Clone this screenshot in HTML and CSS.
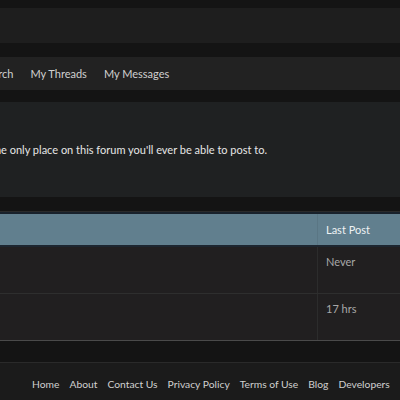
FILE: index.html
```html
<!DOCTYPE html>
<html>
<head>
<meta charset="utf-8">
<link rel="stylesheet" href="styles.css">
</head>
<body>
<div class="page">
  <div class="topstrip"></div>
  <header class="header"></header>
  <nav class="nav">
    <a class="nav-item nav-search">Search</a>
    <a class="nav-item">My Threads</a>
    <a class="nav-item">My Messages</a>
  </nav>
  <section class="notice">
    <p class="notice-text">This is the only place on this forum you'll ever be able to post to.</p>
  </section>
  <div class="table">
    <div class="thead">
      <div class="cell main"></div>
      <div class="cell last">Last Post</div>
    </div>
    <div class="row">
      <div class="cell main"></div>
      <div class="cell last">Never</div>
    </div>
    <div class="row">
      <div class="cell main"></div>
      <div class="cell last">17 hrs</div>
    </div>
  </div>
  <div class="spacer"></div>
  <footer class="footer">
    <a>Home</a>
    <a>About</a>
    <a>Contact Us</a>
    <a>Privacy Policy</a>
    <a>Terms of Use</a>
    <a>Blog</a>
    <a>Developers</a>
  </footer>
</div>
</body>
</html>
```
FILE: styles.css
```css
html, body {
  margin: 0;
  padding: 0;
  background: #141414;
  overflow: hidden;
}
body {
  font-family: Lato, "Open Sans", sans-serif;
  font-size: 11px;
  color: #cccccc;
}
.page {
  width: 400px;
  height: 400px;
  display: flex;
  flex-direction: column;
}
.topstrip {
  height: 8px;
  background: #141414;
}
.header {
  height: 35px;
  background: #1e1e1e;
  margin-bottom: 14px;
}
.nav {
  height: 33px;
  background: #222222;
  display: flex;
  align-items: center;
  gap: 17px;
  margin-bottom: 12px;
  white-space: nowrap;
}
.nav-item {
  color: #d0d0d0;
}
.nav-search {
  margin-left: -19px;
}
.notice {
  height: 95px;
  background: #1f2122;
  display: flex;
  align-items: center;
  margin-bottom: 14px;
  overflow: hidden;
}
.notice-text {
  margin: 0;
  white-space: nowrap;
  margin-left: -42px;
  color: #e6e6e6;
}
.table {
  border-top: 1px solid #2a2a2a;
  display: flex;
  flex-direction: column;
}
.thead {
  height: 31px;
  display: flex;
  background: #617f8e;
  border-top: 2px solid #18212b;
  border-bottom: 2px solid #1d2630;
}
.thead .cell.last {
  color: #eef2f4;
  display: flex;
  align-items: center;
  border-left: 1px solid #5a7684;
}
.row {
  height: 46px;
  display: flex;
  background: #211f20;
  border-bottom: 1px solid #2e2e2e;
}
.row:last-child {
  border-bottom: 1px solid #4a4a4a;
}
.cell.main {
  width: 317px;
}
.cell.last {
  flex: 1;
  padding-left: 8px;
  color: #a8a8a8;
}
.row .cell.last {
  border-left: 1px solid #2c2c2c;
  padding-top: 8px;
}
.spacer {
  height: 21px;
  border-bottom: 1px solid #2a2a2a;
}
.footer {
  flex: 1;
  background: #1b1b1b;
  display: flex;
  align-items: center;
  gap: 10px;
  padding-left: 32px;
  padding-top: 4px;
  white-space: nowrap;
  font-size: 10.3px;
}
.footer a {
  color: #d0d0d0;
}
```
